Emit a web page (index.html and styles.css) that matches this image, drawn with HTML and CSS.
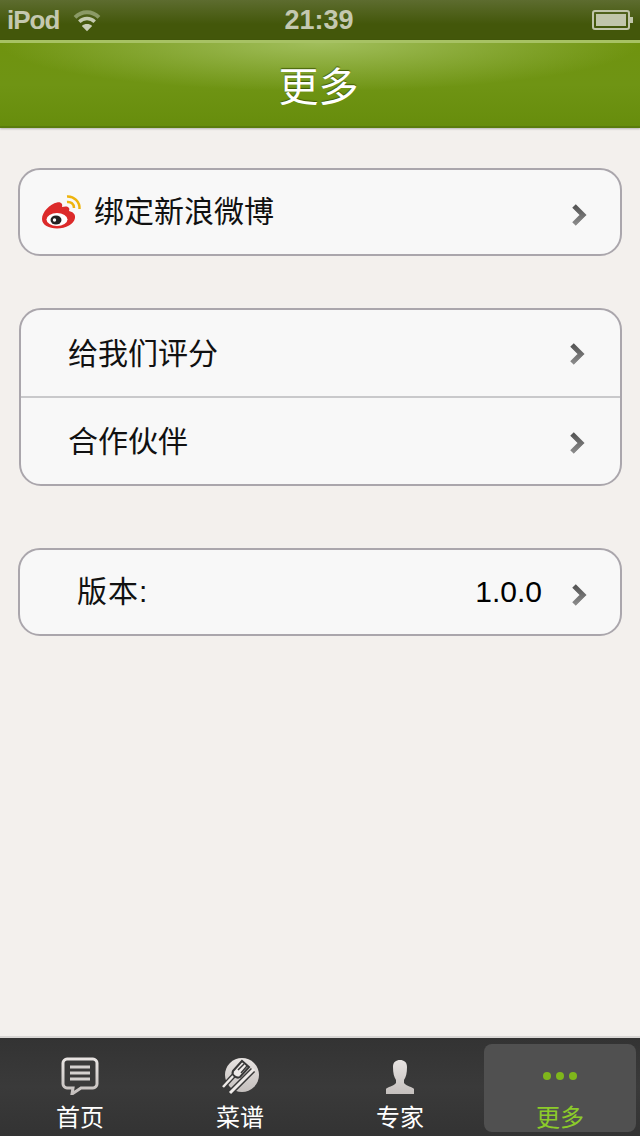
FILE: index.html
```html
<!DOCTYPE html>
<html lang="zh-CN">
<head>
    <meta charset="UTF-8">
    <title>更多</title>
    <link rel="stylesheet" href="styles.css">
</head>
<body>
<svg class="defs" width="0" height="0">
    <defs>
        <linearGradient id="chev" x1="0" y1="0" x2="0" y2="1">
            <stop offset="0" stop-color="#555"/>
            <stop offset="1" stop-color="#8a8a8a"/>
        </linearGradient>
        <linearGradient id="iconfill" x1="0" y1="0" x2="0" y2="1">
            <stop offset="0" stop-color="#e8e4e2"/>
            <stop offset="1" stop-color="#c4bfbd"/>
        </linearGradient>
    </defs>
</svg>
<div class="screen">
    <div class="status">
        <div class="status-left">
            <span class="carrier">iPod</span>
            <svg class="wifi" width="34" height="24" viewBox="0 0 34 28">
                <path d="M3 11C11 3 23 3 31 11" fill="none" stroke="#8b9a66" stroke-width="4.5"/>
                <path d="M8 16C13 11 21 11 26 16" fill="none" stroke="#c4cbb0" stroke-width="4"/>
                <path d="M17 27L11 21C14 18 20 18 23 21Z" fill="#c9cfb6"/>
            </svg>
        </div>
        <span class="clock">21:39</span>
        <svg class="battery" width="42" height="24" viewBox="0 0 42 24">
            <rect x="1" y="3" width="36" height="18" rx="2" fill="none" stroke="#c0c5aa" stroke-width="2"/>
            <rect x="4" y="6" width="30" height="12" fill="#c0c5aa"/>
            <rect x="38" y="9" width="3" height="6" fill="#c0c5aa"/>
        </svg>
    </div>
    <div class="nav"><span class="nav-title">更多</span></div>

    <div class="content">
        <ul class="card">
            <li class="row row-weibo">
                <svg class="weibo" width="40" height="36" viewBox="0 0 40 36">
                    <path d="M0 25C0 18 8 10 15 8.500C19 7.500 21 10 20 13C25 11.500 28.500 13 27 17C31 18 33.500 20 33 24C32 30 24 34.500 15 34.500C7 34.500 0 31 0 25Z" fill="#dc2a2a"/>
                    <ellipse cx="15" cy="25.500" rx="10.500" ry="6.500" fill="#fff"/>
                    <ellipse cx="14" cy="26" rx="5.500" ry="4.500" fill="#222"/>
                    <circle cx="12.500" cy="26" r="1.700" fill="#fff"/>
                    <path d="M25 8C29 7.500 32 10 32 14M25 2.500C32 2 38 8 37.500 15" fill="none" stroke="#eeb40e" stroke-width="2.500"/>
                </svg>
                <span class="label">绑定新浪微博</span>
                <svg class="arrow" width="16" height="24" viewBox="0 0 16 24">
                    <path d="M3 3L12 12L3 21" fill="none" stroke="url(#chev)" stroke-width="5"/>
                </svg>
            </li>
        </ul>

        <ul class="card card-two">
            <li class="row row-plain">
                <span class="label">给我们评分</span>
                <svg class="arrow" width="16" height="24" viewBox="0 0 16 24">
                    <path d="M3 3L12 12L3 21" fill="none" stroke="url(#chev)" stroke-width="5"/>
                </svg>
            </li>
            <li class="row row-plain">
                <span class="label">合作伙伴</span>
                <svg class="arrow" width="16" height="24" viewBox="0 0 16 24">
                    <path d="M3 3L12 12L3 21" fill="none" stroke="url(#chev)" stroke-width="5"/>
                </svg>
            </li>
        </ul>

        <ul class="card card-three">
            <li class="row row-version">
                <span class="label">版本:</span>
                <span class="value">1.0.0</span>
                <svg class="arrow" width="16" height="24" viewBox="0 0 16 24">
                    <path d="M3 3L12 12L3 21" fill="none" stroke="url(#chev)" stroke-width="5"/>
                </svg>
            </li>
        </ul>
    </div>

    <div class="tabbar">
        <div class="tab">
            <svg class="tab-icon" width="38" height="38" viewBox="0 0 38 38">
                <path d="M6 2H32C34 2 36 4 36 6V27C36 29 34 31 32 31H20L11 37L12 31H6C4 31 2 29 2 27V6C2 4 4 2 6 2Z" fill="#3a3a3a" stroke="url(#iconfill)" stroke-width="3"/>
                <path d="M9 10H29M9 16H29M9 22H29" stroke="#d5d2d0" stroke-width="3"/>
            </svg>
            <span class="tab-label">首页</span>
        </div>
        <div class="tab">
            <svg class="tab-icon" width="38" height="38" viewBox="0 0 38 38">
                <circle cx="21" cy="18" r="17" fill="url(#iconfill)"/>
                <path d="M2 30L15 16" stroke="#383838" stroke-width="5"/>
                <path d="M2 30L15 16" stroke="#eeeae8" stroke-width="2.500"/>
                <path d="M12 14L21 4L28 10L19 20C16 22 10 18 12 14Z" fill="#eeeae8" stroke="#383838" stroke-width="2"/>
                <path d="M17 13L23 7M20 16L26 9" stroke="#383838" stroke-width="1.500"/>
                <path d="M9 36L32 13" stroke="#383838" stroke-width="6"/>
                <path d="M9 36L33 12" stroke="#eeeae8" stroke-width="3"/>
            </svg>
            <span class="tab-label">菜谱</span>
        </div>
        <div class="tab">
            <svg class="tab-icon" width="30" height="38" viewBox="0 0 30 38">
                <path d="M8 10C8 5 11 3 15 3C19 3 22 5 22 10C22 16 21 20 19 23V26C21 29 28 30 29 32V37H1V32C2 30 9 29 11 26V23C9 20 8 16 8 10Z" fill="url(#iconfill)"/>
            </svg>
            <span class="tab-label">专家</span>
        </div>
        <div class="tab active">
            <div class="dots"><i></i><i></i><i></i></div>
            <span class="tab-label">更多</span>
        </div>
    </div>
</div>
</body>
</html>
```

FILE: styles.css
```css
* {
    margin: 0;
    padding: 0;
    box-sizing: border-box;
}

body {
    font-family: "Liberation Sans", "Noto Sans CJK SC", sans-serif;
    background: #f3f0ed;
}

.defs {
    display: block;
    height: 0;
}

.screen {
    width: 640px;
    height: 1136px;
    display: flex;
    flex-direction: column;
    overflow: hidden;
}

.status {
    height: 40px;
    padding: 0 6px 0 7px;
    display: grid;
    grid-template-columns: 1fr auto 1fr;
    align-items: center;
    background: linear-gradient(#5d6c2f, #43570a 60%);
    color: #c4c8b0;
    font-weight: bold;
}

.status-left {
    display: flex;
    align-items: center;
    gap: 11px;
}

.carrier {
    font-size: 26px;
    letter-spacing: -1px;
}

.clock {
    font-size: 27px;
    margin-right: 3px;
}

.battery {
    justify-self: end;
}

.nav {
    height: 88px;
    line-height: 88px;
    text-align: center;
    color: #fff;
    font-size: 40px;
    text-shadow: 0 -1px 1px #3f5a05;
    border-top: 3px solid #a7c264;
    border-bottom: 2px solid #5a7c0c;
    background:
        radial-gradient(ellipse 320px 48px at 50% 0, rgba(170, 198, 105, 0.85), rgba(170, 198, 105, 0)),
        linear-gradient(#6f930f, #6f9414 50%, #678d0c);
    box-shadow: 0 1px 2px rgba(0, 0, 0, 0.25);
}

.nav-title {
    margin-right: 3px;
}

.content {
    flex: 1;
    padding: 40px 18px 0;
}

.card {
    list-style: none;
    background: #f8f8f8;
    border: 2px solid #aaa6ac;
    border-radius: 22px;
}

.card-two {
    margin: 52px 0 0 1px;
}

.card-three {
    margin-top: 62px;
}

.row {
    height: 84px;
    display: flex;
    align-items: center;
    color: #111;
    font-size: 30px;
}

.row-weibo {
    padding: 0 33px 0 22px;
}

.weibo {
    margin-right: 12px;
}

.row-plain {
    height: 86px;
    padding: 0 35px 0 47px;
}

.row-plain + .row-plain {
    height: 88px;
    border-top: 2px solid #c9c9cb;
}

.row-version {
    padding: 0 33px 0 57px;
}

.label {
    flex: 1;
    margin-bottom: 6px;
}

.row-plain .label {
    margin-bottom: 4px;
}

.row-version .label {
    letter-spacing: 1px;
}

.value {
    margin-right: 29px;
    color: #000;
}

.arrow {
    flex: none;
    filter: drop-shadow(0 1px 0 #fff);
}

.row-weibo .arrow,
.row-version .arrow {
    margin-top: 6px;
}

.row-plain .arrow {
    margin-top: 2px;
}

.row-plain + .row-plain .arrow {
    margin-top: 4px;
}

.tabbar {
    height: 100px;
    display: flex;
    padding-top: 6px;
    border-top: 2px solid #d8d6d4;
    background: linear-gradient(#333, #3a3a3a 50%, #333);
}

.tab {
    width: 152px;
    margin: 0 4px 4px;
    padding-top: 13px;
    display: flex;
    flex-direction: column;
    align-items: center;
    border-radius: 8px;
}

.tab-icon {
    height: 38px;
    flex: none;
}

.tab-label {
    height: 28px;
    line-height: 28px;
    font-size: 24px;
    color: #fff;
    margin-top: 9px;
}

.active {
    background: #505050;
}

.active .tab-label {
    color: #8ccb2a;
}

.dots {
    height: 38px;
    flex: none;
    display: flex;
    align-items: center;
    gap: 5px;
}

.dots i {
    width: 8px;
    height: 8px;
    border-radius: 50%;
    background: #7fb61b;
}
```
